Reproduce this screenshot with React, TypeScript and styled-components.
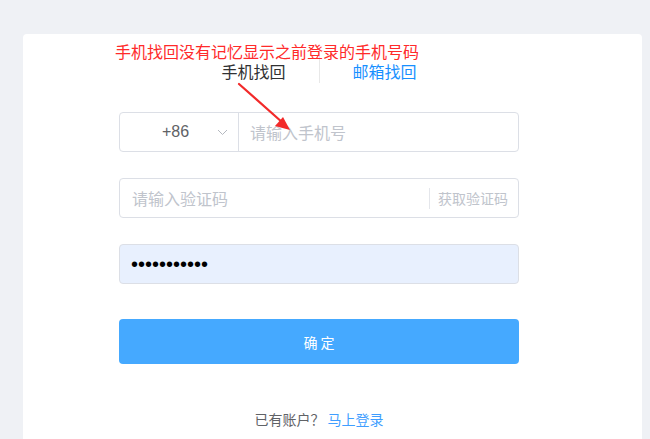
import React from "react";
import styled, { createGlobalStyle } from "styled-components";

const GlobalStyle = createGlobalStyle`
  html, body {
    margin: 0;
    padding: 0;
    background: #eff1f5;
    overflow: hidden;
  }
  body {
    font-family: "Liberation Sans", "Noto Sans CJK SC", sans-serif;
  }
`;

const Page = styled.div`
  width: 650px;
  height: 439px;
  padding: 34px 8px 0 23px;
  box-sizing: border-box;
  overflow: hidden;
`;

const Card = styled.div`
  position: relative;
  width: 619px;
  min-height: 420px;
  background: #ffffff;
  border-radius: 4px 4px 0 0;
  padding: 16px 0 0 96px;
  box-sizing: border-box;
`;

const Note = styled.div`
  position: absolute;
  left: 92px;
  top: 9px;
  height: 17px;
  font-family: "Noto Sans CJK SC", sans-serif;
  font-size: 16px;
  line-height: 17px;
  color: #ff2a2a;
  white-space: nowrap;
`;

const Arrow = styled.svg`
  position: absolute;
  left: 210px;
  top: 46px;
`;

const Form = styled.div`
  width: 400px;
  display: flex;
  flex-direction: column;
`;

const Tabs = styled.div`
  align-self: center;
  width: 261px;
  height: 33px;
  display: flex;
  align-items: flex-end;
`;

const Tab = styled.div<{ $active?: boolean }>`
  flex: 1;
  text-align: center;
  font-family: "Noto Sans CJK SC", sans-serif;
  font-size: 16px;
  line-height: 17px;
  padding-bottom: 3px;
  color: ${(p) => (p.$active ? "#303133" : "#1890ff")};
`;

const TabDivider = styled.div`
  width: 1px;
  align-self: stretch;
  background: #e8e8e8;
`;

const Field = styled.div<{ $filled?: boolean; $gap: number }>`
  margin-top: ${(p) => p.$gap}px;
  height: 40px;
  box-sizing: border-box;
  border: 1px solid #dcdfe6;
  border-radius: 4px;
  background: ${(p) => (p.$filled ? "#e8f0fe" : "#ffffff")};
  display: flex;
  align-items: center;
`;

const Prefix = styled.div`
  width: 119px;
  height: 100%;
  box-sizing: border-box;
  border-right: 1px solid #dcdfe6;
  display: flex;
  align-items: center;
  padding-left: 42px;
  gap: 28px;
  font-size: 16px;
  color: #606266;
`;

const Placeholder = styled.span<{ $pad: number }>`
  flex: 1;
  padding-left: ${(p) => p.$pad}px;
  font-family: "Noto Sans CJK SC", sans-serif;
  font-size: 16px;
  color: #c0c4cc;
`;

const CodeButton = styled.span`
  height: 21px;
  border-left: 1px solid #e4e6eb;
  padding: 0 10px 0 8px;
  display: flex;
  align-items: center;
  font-family: "Noto Sans CJK SC", sans-serif;
  font-size: 14px;
  color: #c0c4cc;
`;

const Dots = styled.span`
  padding-left: 11px;
  font-family: "Liberation Sans", sans-serif;
  font-size: 20px;
  color: #000000;
`;

const Submit = styled.button`
  margin-top: 35px;
  height: 45px;
  border: none;
  border-radius: 4px;
  background: #45a9ff;
  color: #ffffff;
  font-family: "Noto Sans CJK SC", sans-serif;
  font-size: 14px;
  padding: 0;
  cursor: pointer;
`;

const Footer = styled.div`
  margin-top: 44px;
  text-align: center;
  font-family: "Noto Sans CJK SC", sans-serif;
  font-size: 14px;
  line-height: 22px;
  color: #606266;
`;

const Link = styled.a`
  color: #409eff;
  text-decoration: none;
`;

export default function App() {
  return (
    <>
      <GlobalStyle />
      <Page>
        <Card>
          <Note>手机找回没有记忆显示之前登录的手机号码</Note>
          <Arrow width="66" height="56" viewBox="0 0 66 56">
            <path d="M6 4 L50 43" stroke="#f22a2a" strokeWidth="2.2" strokeLinecap="round" />
            <path d="M57 50 L42 46 L50 37 Z" fill="#f22a2a" />
          </Arrow>
          <Form>
            <Tabs>
              <Tab $active>手机找回</Tab>
              <TabDivider />
              <Tab>邮箱找回</Tab>
            </Tabs>
            <Field $gap={29}>
              <Prefix>
                <span>+86</span>
                <svg width="11" height="7" viewBox="0 0 11 7">
                  <path d="M1 1 L5.5 5.5 L10 1" fill="none" stroke="#b4b8bf" strokeWidth="1" />
                </svg>
              </Prefix>
              <Placeholder $pad={11}>请输入手机号</Placeholder>
            </Field>
            <Field $gap={26}>
              <Placeholder $pad={12}>请输入验证码</Placeholder>
              <CodeButton>获取验证码</CodeButton>
            </Field>
            <Field $gap={26} $filled>
              <Dots>•••••••••••</Dots>
            </Field>
            <Submit>确 定</Submit>
            <Footer>
              已有账户？ <Link href="#">马上登录</Link>
            </Footer>
          </Form>
        </Card>
      </Page>
    </>
  );
}
